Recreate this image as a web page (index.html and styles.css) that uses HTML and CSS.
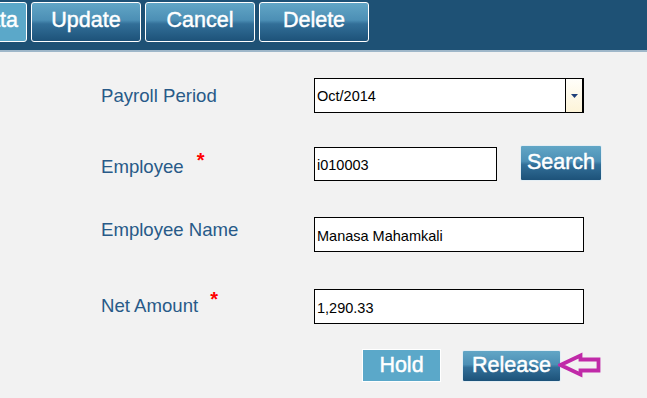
FILE: index.html
```html
<!DOCTYPE html>
<html>
<head>
<meta charset="utf-8">
<link rel="stylesheet" href="styles.css">
</head>
<body>
<div class="toolbar">
  <button class="tbtn tbtn-flat tbtn-cut">Data</button>
  <button class="tbtn">Update</button>
  <button class="tbtn">Cancel</button>
  <button class="tbtn">Delete</button>
</div>
<div class="form">
  <div class="row row-period">
    <label class="lbl">Payroll Period</label>
    <div class="select">
      <span class="select-value">Oct/2014</span>
      <span class="select-arrow"><svg width="7" height="4" viewBox="0 0 7 4"><path d="M0 0H7L3.5 4Z" fill="#1f3f7a"/></svg></span>
    </div>
  </div>
  <div class="row row-emp">
    <label class="lbl">Employee<span class="req">*</span></label>
    <div class="field-group">
      <input class="inp inp-short" type="text" value="i010003">
      <button class="btn btn-search">Search</button>
    </div>
  </div>
  <div class="row row-name">
    <label class="lbl">Employee Name</label>
    <input class="inp" type="text" value="Manasa Mahamkali">
  </div>
  <div class="row row-amount">
    <label class="lbl">Net Amount<span class="req req-amt">*</span></label>
    <input class="inp" type="text" value="1,290.33">
  </div>
  <div class="actions">
    <button class="btn btn-flat btn-hold">Hold</button>
    <button class="btn btn-release">Release</button>
    <svg class="pointer" width="44" height="26" viewBox="0 0 44 26">
      <polygon points="2.5,13 22.5,3.5 22.5,7.5 40.5,7.5 40.5,18.5 22.5,18.5 22.5,22.5" fill="#f2f2f2" stroke="#c02aa8" stroke-width="3.8" stroke-linejoin="miter"/>
    </svg>
  </div>
</div>
</body>
</html>
```
FILE: styles.css
```css
* { box-sizing: border-box; }
html, body { margin: 0; padding: 0; }
body {
  background: #f2f2f2;
  font-family: "Liberation Sans", Arial, Helvetica, sans-serif;
  width: 647px;
  height: 398px;
  overflow: hidden;
}
.toolbar {
  height: 52px;
  background: #1e5175;
  border-bottom: 2px solid #9fb7c9;
  display: flex;
  gap: 4px;
  padding-top: 2px;
  overflow: hidden;
}
.tbtn {
  height: 40px;
  width: 110px;
  flex: none;
  border: 1px solid #ffffff;
  border-radius: 3px;
  background: linear-gradient(to bottom, #62a6c6 0%, #4c8fb5 45%, #326f98 55%, #1d5279 100%);
  color: #ffffff;
  font-family: "Liberation Sans", Arial, sans-serif;
  font-weight: normal;
  font-size: 21.5px;
  -webkit-text-stroke: 0.45px #ffffff;
  padding: 0 0 3px 0;
  margin: 0;
}
.tbtn-flat { background: #5ba8c9; }
.tbtn-cut {
  width: 70px;
  margin-left: -43px;
  text-align: right;
  padding-right: 8px;
}
.form {
  padding: 26px 0 0 101px;
}
.row {
  display: grid;
  grid-template-columns: 213px 270px;
  align-items: start;
}
.lbl {
  color: #285a88;
  font-size: 18.6px;
  line-height: 22px;
}
.row-period .lbl { margin-top: 7px; }
.row-emp { margin-top: 32px; }
.row-emp .lbl { margin-top: 10px; }
.row-name { margin-top: 36px; }
.row-name .lbl { margin-top: 2px; }
.row-amount { margin-top: 37px; }
.row-amount .lbl { margin-top: 5px; }
.req {
  color: #ff0000;
  font-weight: bold;
  font-size: 20px;
  position: relative;
  top: -6px;
  margin-left: 13px;
}
.req-amt { margin-left: 12px; }
.select {
  height: 35px;
  border: 1px solid #000;
  background: #fff;
  display: flex;
  align-items: center;
}
.select-value {
  flex: 1;
  font-size: 14.5px;
  padding-left: 2px;
  color: #000;
}
.select-arrow {
  width: 18px;
  height: 100%;
  border-left: 1px solid #000;
  border-right: 1px solid #000;
  background: linear-gradient(to bottom, #fffefa, #fdf4d8);
  display: flex;
  align-items: center;
  justify-content: center;
}
.field-group {
  display: flex;
  align-items: start;
}
.inp {
  width: 270px;
  height: 35px;
  border: 1px solid #000;
  background: #fff;
  font-family: "Liberation Sans", Arial, sans-serif;
  font-size: 14.5px;
  color: #000;
  padding: 2px 0 0 2px;
  margin: 0;
  outline: none;
}
.inp-short {
  flex: none;
  width: 183px;
  height: 34px;
  margin-top: 2px;
}
.btn {
  flex: none;
  border: 1px solid #e4eef4;
  border-radius: 2px;
  background: linear-gradient(to bottom, #62a6c6 0%, #4c8fb5 45%, #326f98 55%, #1d5279 100%);
  color: #fff;
  font-family: "Liberation Sans", Arial, sans-serif;
  font-weight: normal;
  font-size: 21.5px;
  -webkit-text-stroke: 0.45px #ffffff;
  padding: 0 0 2px 0;
  margin: 0;
}
.btn-search {
  width: 82px;
  height: 36px;
  margin-left: 23px;
}
.actions {
  position: relative;
  display: flex;
  align-items: start;
  margin-top: 25px;
  margin-left: 261px;
}
.btn-hold {
  width: 79px;
  height: 33px;
  background: #5ba8c9;
  border: 1px solid #fff;
  border-radius: 0;
  padding-top: 2px;
}
.btn-release {
  width: 99px;
  height: 32px;
  margin-left: 21px;
  margin-top: 1px;
}
.pointer {
  position: absolute;
  left: 196px;
  top: 3px;
}
```
